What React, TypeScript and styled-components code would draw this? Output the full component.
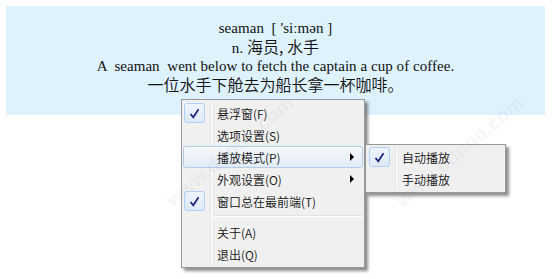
import styled, { createGlobalStyle } from "styled-components";

const GlobalStyle = createGlobalStyle`
    html, body {
        margin: 0;
        padding: 0;
        background: #ffffff;
    }
`;

interface I_Item {
    active?: boolean;
};

const Page = styled.div`
    position: relative;
    width: 554px;
    height: 279px;
    overflow: hidden;
    background: #ffffff;
`;

const Panel = styled.div`
    margin: 6px 9px 0px 6px;
    height: 109px;
    box-sizing: border-box;
    padding-top: 13px;
    background-color: #ddf2fd;
    display: flex;
    flex-direction: column;
    align-items: center;
    color: #111111;
    font-family: "Liberation Serif", "Noto Sans CJK SC", serif;
`;

const Line = styled.div`
    font-size: 15px;
    line-height: 18px;
    white-space: pre;
    letter-spacing: 0.05px;
`;

const Cjk = styled.span`
    font-family: "Noto Sans CJK SC", sans-serif;
    font-size: 16px;
    font-weight: 350;
`;

const CjkLine = styled.div`
    font-family: "Noto Sans CJK SC", sans-serif;
    font-size: 16px;
    font-weight: 350;
    line-height: 19px;
    white-space: pre;
`;

const Menu = styled.div`
    position: absolute;
    left: 181px;
    top: 99px;
    display: flex;
    flex-direction: column;
    padding: 2px 1px 2px 1px;
    background-color: #f0f0f0;
    border: 1px solid #979797;
    box-shadow: 3px 3px 3px rgba(0, 0, 0, 0.45);
    font-family: "Noto Sans CJK SC", sans-serif;
    font-size: 12px;
    font-weight: 350;
    color: #111111;

    &::before {
        content: "";
        position: absolute;
        top: 2px;
        bottom: 2px;
        left: 28px;
        width: 1px;
        background: #e2e3e3;
        border-right: 1px solid #ffffff;
    }
`;

const Item = styled.div<I_Item>`
    position: relative;
    box-sizing: border-box;
    height: 22px;
    display: flex;
    align-items: center;
    padding-left: 33px;
    border: 1px solid ${(props) => props.active ? "#b3cdec" : "transparent"};
    border-radius: 3px;
    background: ${(props) => props.active ? "linear-gradient(#f5f8fc, #e2ebf6)" : "transparent"};
    z-index: 1;
`;

const MainItem = styled(Item)`
    width: 180px;
`;

const SubItem = styled(Item)`
    width: 136px;
`;

const CheckBox = styled.div`
    position: absolute;
    left: 0px;
    top: 0px;
    width: 21px;
    height: 20px;
    box-sizing: border-box;
    border: 1px solid #aecff7;
    border-radius: 3px;
    background: linear-gradient(#eef5fd, #dde9f8);
    display: flex;
    align-items: center;
    justify-content: center;
`;

const Arrow = styled.div`
    position: absolute;
    right: 8px;
    top: 6px;
    width: 0;
    height: 0;
    border-top: 4px solid transparent;
    border-bottom: 4px solid transparent;
    border-left: 4px solid #000000;
`;

const Separator = styled.div`
    height: 1px;
    margin: 3px 0px 4px 30px;
    background: #e2e3e3;
    border-bottom: 1px solid #ffffff;
`;

const SubMenu = styled(Menu)`
    left: 181px;
    top: -3px;
    padding: 1px 1px 2px 2px;
    z-index: 2;

    &::before {
        left: 29px;
    }
`;

const Watermark = styled.div`
    position: absolute;
    font-family: "Liberation Sans", "Noto Sans CJK SC", sans-serif;
    font-size: 20px;
    font-weight: bold;
    color: rgba(150, 160, 170, 0.09);
    transform: rotate(-40deg);
    white-space: nowrap;
    pointer-events: none;
    z-index: 5;
`;

function Check() {
    return (
        <svg width="11" height="11" viewBox="0 0 11 11">
            <path d="M1.5 6 L4.3 9.3 L9.5 1.2" fill="none" stroke="#1b1f7a" strokeWidth="1.7" />
        </svg>
    );
};

interface MenuRowProps {
    label: string;
    checked?: boolean;
    arrow?: boolean;
    active?: boolean;
    children?: React.ReactNode;
};

function MenuRow({label, checked, arrow, active, children}: MenuRowProps) {
    return (
        <MainItem active={active}>
            {checked && <CheckBox><Check /></CheckBox>}
            {label}
            {arrow && <Arrow />}
            {children}
        </MainItem>
    );
};

export default function App() {
    return (
        <Page>
            <GlobalStyle />
            <Panel>
                <Line>{"seaman  [ 'siːmən ]"}</Line>
                <Line>n. <Cjk>海员, 水手</Cjk></Line>
                <Line>{"A  seaman  went below to fetch the captain a cup of coffee."}</Line>
                <CjkLine>一位水手下舱去为船长拿一杯咖啡。</CjkLine>
            </Panel>
            <Menu>
                <MenuRow label="悬浮窗(F)" checked />
                <MenuRow label="选项设置(S)" />
                <MenuRow label="播放模式(P)" arrow active>
                    <SubMenu>
                        <SubItem>
                            <CheckBox><Check /></CheckBox>
                            自动播放
                        </SubItem>
                        <SubItem>手动播放</SubItem>
                    </SubMenu>
                </MenuRow>
                <MenuRow label="外观设置(O)" arrow />
                <MenuRow label="窗口总在最前端(T)" checked />
                <Separator />
                <MenuRow label="关于(A)" />
                <MenuRow label="退出(Q)" />
            </Menu>
            <Watermark style={{ left: 150, top: 140 }}>www.ddooo.com</Watermark>
            <Watermark style={{ left: 380, top: 140 }}>www.ddooo.com</Watermark>
        </Page>
    );
};
